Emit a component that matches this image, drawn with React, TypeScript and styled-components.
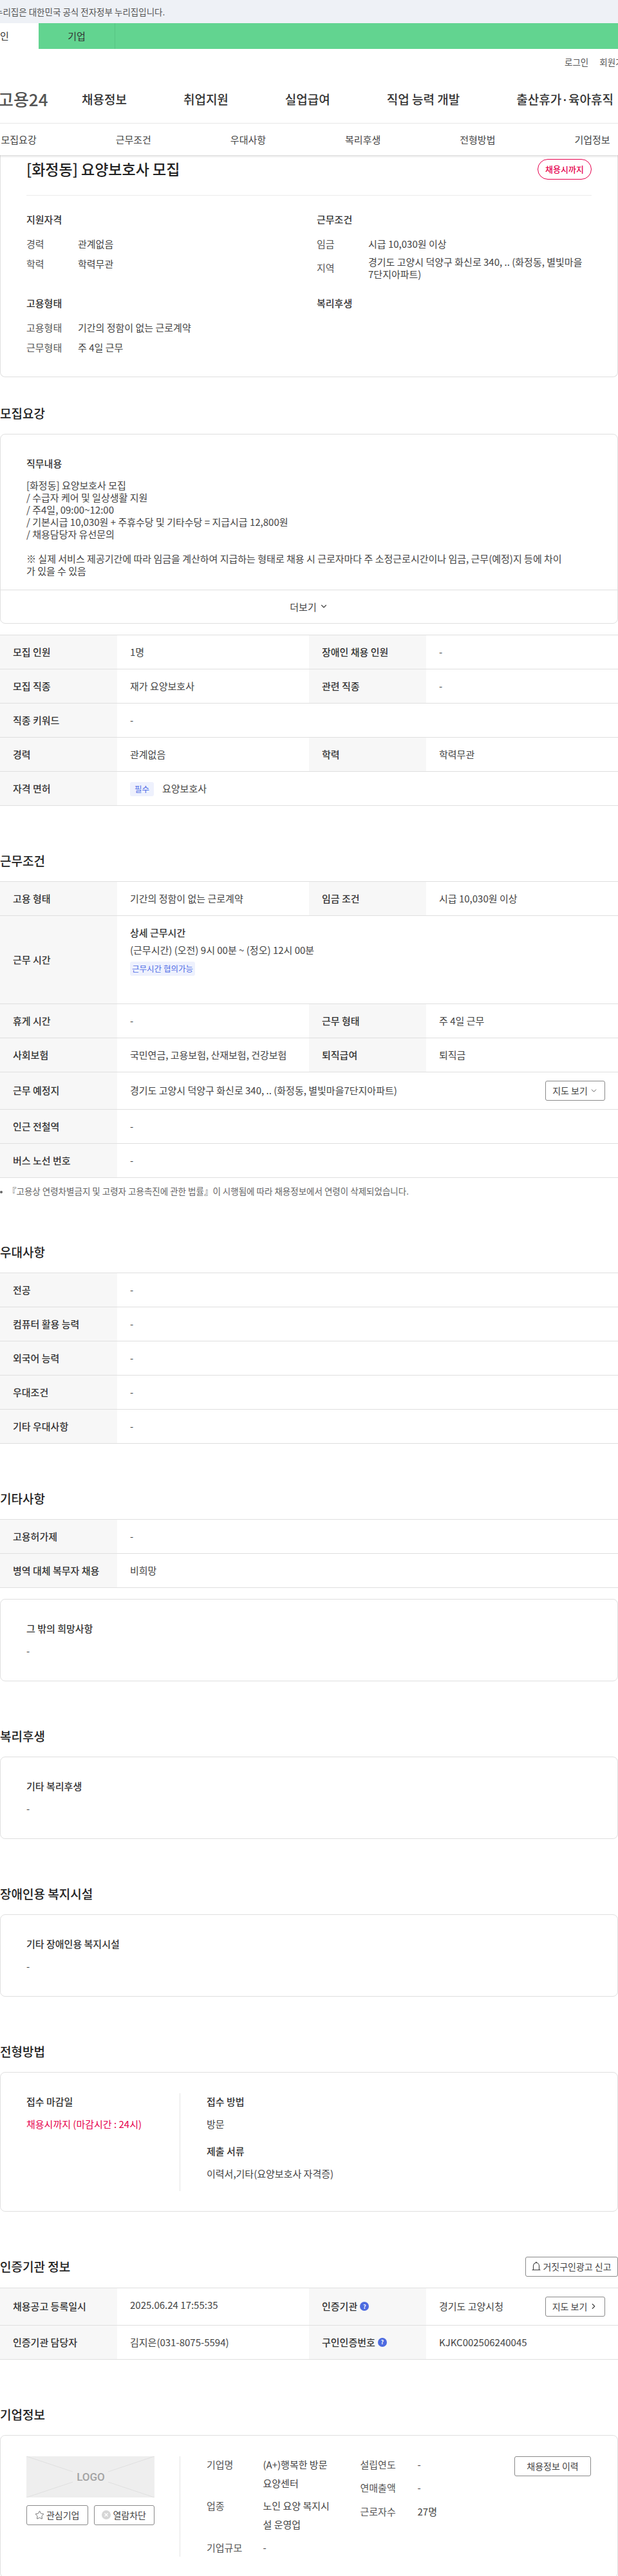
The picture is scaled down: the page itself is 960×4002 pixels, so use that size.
import React from "react";
import { FC, ReactNode } from "react";
import styled, { createGlobalStyle } from "styled-components";
import { ChevronDown, ChevronRight, Star } from "lucide-react";

const GlobalStyle = createGlobalStyle`
  * {
    box-sizing: border-box;
  }
  html, body {
    margin: 0;
    padding: 0;
    background: #fff;
  }
  body {
    font-family: "Noto Sans CJK KR", "Noto Sans", sans-serif;
    font-size: 15px;
    color: #444;
  }
`;

const Page = styled.div`
  width: 960px;
  height: 4002px;
  overflow: hidden;
`;

/* top strips */
const GovBar = styled.div`
  height: 36px;
  background: #eef1f6;
  padding-left: 0;
  font-size: 13.5px;
  line-height: 36px;
  color: #555;
  white-space: nowrap;
  & > span {
    display: block;
    margin-left: -8px;
  }
`;
const GreenBar = styled.div`
  display: flex;
  height: 40px;
  background: #62d490;
`;
const SiteTab = styled.div<{ $active?: boolean }>`
  flex: none;
  margin-left: ${(p) => (p.$active ? "-60px" : "0")};
  width: ${(p) => (p.$active ? "120px" : "119px")};
  background: ${(p) => (p.$active ? "#fff" : "transparent")};
  border-right: ${(p) => (p.$active ? "0" : "1px solid #58c583")};
  font-size: 15px;
  line-height: 40px;
  text-align: center;
  color: #333;
`;

/* header */
const UtilRow = styled.div`
  display: flex;
  gap: 17px;
  height: 40px;
  padding-left: 877px;
  font-size: 13.5px;
  line-height: 40px;
  color: #555;
  white-space: nowrap;
`;
const NavRow = styled.nav`
  display: flex;
  align-items: center;
  height: 76px;
  margin-top: 0;
  border-bottom: 1px solid #e8e8e8;
  white-space: nowrap;
  padding-bottom: 0;
`;
const SiteLogo = styled.div`
  flex: none;
  width: 127px;
  margin-left: -3px;
  padding-right: 0;
  font-size: 26px;
  font-weight: 500;
  color: #555;
  line-height: 1;
`;
const NavLinks = styled.div`
  display: flex;
  gap: 88px;
  margin-left: 3px;
  font-size: 19px;
  font-weight: 500;
  color: #333;
`;
const TabBar = styled.div`
  display: grid;
  grid-template-columns: repeat(6, 178.2px);
  margin-left: -60px;
  height: 49px;
  font-size: 15px;
  line-height: 49px;
  text-align: center;
  color: #444;
`;
const TabBarWrap = styled.div`
  position: relative;
  z-index: 1;
  height: 49px;
  box-shadow: 0 2px 3px rgba(0, 0, 0, 0.14);
  background: #fff;
`;

/* cards */
const Card = styled.div`
  border: 1px solid #dfdfdf;
  border-radius: 8px;
  background: #fff;
  overflow: hidden;
`;
const SummaryCard = styled(Card)`
  height: 345px;
  border-top: 0;
  border-radius: 0 0 8px 8px;
  padding: 6px 40px 0;
`;
const SummaryHead = styled.div`
  display: flex;
  align-items: flex-start;
  justify-content: space-between;
  height: 57px;
  border-bottom: 1px solid #ebebeb;
`;
const JobTitle = styled.h1`
  margin: 0;
  font-size: 23px;
  font-weight: 500;
  line-height: 30px;
  color: #222;
`;
const DeadlinePill = styled.div`
  width: 84px;
  height: 32px;
  border: 1px solid #e6004d;
  border-radius: 16px;
  font-size: 13px;
  font-weight: 500;
  line-height: 30px;
  text-align: center;
  color: #e6004d;
`;
const SummaryGrid = styled.div`
  display: grid;
  grid-template-columns: 451px 1fr;
  row-gap: 25.5px;
  margin-top: 26px;
`;
const SubTitle = styled.h3`
  margin: 0 0 13px;
  font-size: 15px;
  font-weight: 500;
  line-height: 22px;
  color: #333;
`;
const InfoRow = styled.div`
  display: flex;
  align-items: center;
  min-height: 26px;
  & + & {
    margin-top: 5.5px;
  }
`;
const InfoLabel = styled.span`
  flex: none;
  width: 80px;
  color: #555;
`;
const InfoValue = styled.span`
  line-height: 19px;
  color: #444;
`;

/* sections */
const SectionHead = styled.div<{ $first?: boolean }>`
  display: flex;
  align-items: center;
  justify-content: space-between;
  margin-top: ${(p) => (p.$first ? "40.5px" : "70px")};
  margin-bottom: 17px;
  min-height: 30px;
`;
const SectionTitle = styled.h2`
  margin: 0;
  font-size: 19px;
  font-weight: 500;
  line-height: 30px;
  color: #222;
`;

const DutyBody = styled.div`
  padding: 34px 40px 20px;
`;
const DutyText = styled.div`
  line-height: 19px;
  white-space: pre-line;
  color: #444;
`;
const MoreRow = styled.div`
  display: flex;
  align-items: center;
  justify-content: center;
  gap: 4px;
  height: 52px;
  border-top: 1px solid #dfdfdf;
  color: #444;
`;

const TextCard = styled(Card)<{ $spaced?: boolean }>`
  margin-top: ${(p) => (p.$spaced ? "17px" : "0")};
  padding: 34px 40px 35px;
`;
const PlainValue = styled.div`
  line-height: 22px;
  color: #444;
`;
const AccentValue = styled(PlainValue)`
  color: #e6004d;
`;

/* tables */
const Table = styled.div<{ $spaced?: boolean }>`
  margin-top: ${(p) => (p.$spaced ? "17px" : "0")};
  border-top: 1px solid #dfdfdf;
`;
const Row = styled.div`
  display: grid;
  grid-template-columns: 182px 298px 182px 298px;
  border-bottom: 1px solid #dfdfdf;
`;
const Th = styled.div`
  display: flex;
  align-items: center;
  gap: 4px;
  padding: 13px 20px;
  background: #f7f7f7;
  font-weight: 500;
  line-height: 26px;
  color: #333;
  white-space: nowrap;
`;
const Td = styled.div<{ $wide?: boolean }>`
  grid-column: ${(p) => (p.$wide ? "span 3" : "auto")};
  padding: 13px 20px;
  line-height: 26px;
  color: #444;
  min-width: 0;
`;
const FlexTd = styled(Td)`
  display: flex;
  align-items: center;
  justify-content: space-between;
`;
const HoursTd = styled(Td)`
  padding-bottom: 43px;
`;
const HoursTitle = styled.div`
  font-weight: 500;
  color: #333;
`;
const HoursLine = styled.div`
  margin-top: 1px;
`;
const Tag = styled.span`
  display: inline-block;
  height: 22px;
  padding: 0 7px;
  border-radius: 3px;
  background: #eef1fd;
  font-size: 12.5px;
  line-height: 22px;
  color: #4f6de6;
  vertical-align: middle;
`;
const HoursTag = styled(Tag)`
  display: block;
  width: 101px;
  margin-top: 5px;
  padding: 0;
  text-align: center;
`;
const LicenceTag = styled(Tag)`
  margin-right: 13px;
`;
const OutlineButton = styled.button`
  display: inline-flex;
  align-items: center;
  justify-content: center;
  flex: none;
  height: 31px;
  padding: 0;
  gap: 3px;
  border: 1px solid #8a8a8a;
  border-radius: 3px;
  background: #fff;
  font-family: inherit;
  font-size: 14px;
  color: #444;
  white-space: nowrap;
`;
const MapButton = styled(OutlineButton)`
  width: 93px;
`;
const ReportButton = styled(OutlineButton)`
  width: 144px;
`;
const Footnote = styled.p`
  margin: 10px 0 0;
  font-size: 13.5px;
  line-height: 20px;
  color: #666;
  white-space: nowrap;
  &::before {
    content: "";
    display: inline-block;
    width: 4px;
    height: 4px;
    margin-right: 8px;
    border-radius: 50%;
    background: #666;
    vertical-align: middle;
  }
`;
const HelpDot = styled.span`
  display: inline-flex;
  align-items: center;
  justify-content: center;
  width: 14px;
  height: 14px;
  border-radius: 50%;
  background: #4d6be0;
  font-size: 9px;
  font-weight: 700;
  line-height: 1;
  color: #fff;
`;

/* 전형방법 */
const ProcessCard = styled(Card)`
  display: flex;
  height: 217px;
  padding: 32px 40px 0;
`;
const ProcessLeft = styled.div`
  width: 239px;
  height: 152px;
  padding-top: 2px;
  border-right: 1px solid #e5e5e5;
`;
const ProcessRight = styled.div`
  padding: 2px 0 0 41px;
`;
const ProcessBlock = styled.div`
  & + & {
    margin-top: 20px;
  }
`;

/* 기업정보 */
const CompanyCard = styled(Card)`
  display: flex;
  height: 222px;
  padding: 32px 40px 0;
`;
const CompanyLeft = styled.div`
  flex: none;
  width: 239px;
  height: 156px;
  padding-right: 40px;
  border-right: 1px solid #e5e5e5;
`;
const LogoBox = styled.svg`
  display: block;
  width: 199px;
  height: 64px;
`;
const CompanyButtons = styled.div`
  display: grid;
  grid-template-columns: 95.5px 94.5px;
  column-gap: 9px;
  margin-top: 12px;
`;
const CompanyCol = styled.dl<{ $width: string }>`
  display: grid;
  flex: none;
  grid-template-columns: ${(p) => p.$width};
  align-content: start;
  margin: -2px 0 0;
`;
const CompanyNameCol = styled(CompanyCol)`
  width: 238.5px;
  margin-left: 41px;
  row-gap: 6.7px;
`;
const CompanyStatCol = styled(CompanyCol)`
  width: 239.5px;
  row-gap: 7.5px;
`;
const CompanyLabel = styled.dt`
  line-height: 29px;
  color: #555;
`;
const CompanyValue = styled.dd`
  margin: 0;
  line-height: 29px;
  color: #444;
`;
const HistoryButton = styled(OutlineButton)`
  width: 119px;
`;

const infoBlocks = [
  {
    title: "지원자격",
    rows: [
      ["경력", "관계없음"],
      ["학력", "학력무관"],
    ],
  },
  {
    title: "근무조건",
    rows: [
      ["임금", "시급 10,030원 이상"],
      ["지역", "경기도 고양시 덕양구 화신로 340, .. (화정동, 별빛마을\n7단지아파트)"],
    ],
  },
  {
    title: "고용형태",
    rows: [
      ["고용형태", "기간의 정함이 없는 근로계약"],
      ["근무형태", "주 4일 근무"],
    ],
  },
  { title: "복리후생", rows: [] },
];

const dutyText = `[화정동]  요양보호사 모집
/ 수급자 케어 및 일상생활 지원
/ 주4일, 09:00~12:00
/ 기본시급 10,030원 + 주휴수당 및 기타수당  = 지급시급 12,800원
/  채용담당자 유선문의

 ※ 실제 서비스 제공기간에 따라 임금을 계산하여 지급하는 형태로 채용 시 근로자마다 주 소정근로시간이나 임금, 근무(예정)지 등에 차이
가 있을 수 있음`;

const BellIcon = () => (
  <svg width="14" height="16" viewBox="0 0 14 16" fill="none" stroke="#444" strokeWidth="1.1">
    <path d="M2.5 13.5V7a4.5 4.5 0 0 1 9 0v6.5" />
    <path d="M0.5 13.5h13" />
    <path d="M6 2.4 7 1.4l1 1" />
  </svg>
);

const BlockIcon = () => (
  <svg width="14" height="14" viewBox="0 0 14 14">
    <circle cx="7" cy="7" r="7" fill="#d6d6d6" />
    <path d="M4.5 4.5l5 5M9.5 4.5l-5 5" stroke="#fff" strokeWidth="1.3" />
  </svg>
);

const LogoPlaceholder = () => (
  <LogoBox viewBox="0 0 199 64">
    <rect width="199" height="64" fill="#eeeeee" />
    <path d="M0 0 72 24M199 0 127 24M0 64 72 40M199 64 127 40" stroke="#e0e0e0" strokeWidth="1" />
    <text
      x="100"
      y="38"
      textAnchor="middle"
      fontFamily="Roboto, sans-serif"
      fontSize="17"
      fontWeight="500"
      fill="#a3a3a3"
    >
      LOGO
    </text>
  </LogoBox>
);

const Section: FC<{ title: string; first?: boolean; action?: ReactNode; children: ReactNode }> = ({
  title,
  first,
  action,
  children,
}) => (
  <section>
    <SectionHead $first={first}>
      <SectionTitle>{title}</SectionTitle>
      {action}
    </SectionHead>
    {children}
  </section>
);

const LabelOnlyTable: FC<{ rows: string[][]; spaced?: boolean }> = ({ rows, spaced }) => (
  <Table $spaced={spaced}>
    {rows.map(([label, value]) => (
      <Row key={label}>
        <Th>{label}</Th>
        <Td $wide>{value}</Td>
      </Row>
    ))}
  </Table>
);

const TextBlockCard: FC<{ title: string; spaced?: boolean }> = ({ title, spaced }) => (
  <TextCard $spaced={spaced}>
    <SubTitle>{title}</SubTitle>
    <PlainValue>-</PlainValue>
  </TextCard>
);

export default function App() {
  return (
    <Page>
      <GlobalStyle />
      <GovBar>
        <span>누리집은 대한민국 공식 전자정부 누리집입니다.</span>
      </GovBar>
      <GreenBar>
        <SiteTab $active>개인</SiteTab>
        <SiteTab>기업</SiteTab>
      </GreenBar>
      <UtilRow>
        <span>로그인</span>
        <span>회원가입</span>
      </UtilRow>
      <NavRow>
        <SiteLogo>고용24</SiteLogo>
        <NavLinks>
          <span>채용정보</span>
          <span>취업지원</span>
          <span>실업급여</span>
          <span>직업 능력 개발</span>
          <span>출산휴가·육아휴직</span>
        </NavLinks>
      </NavRow>
      <TabBarWrap>
        <TabBar>
          {["모집요강", "근무조건", "우대사항", "복리후생", "전형방법", "기업정보"].map((t) => (
            <span key={t}>{t}</span>
          ))}
        </TabBar>
      </TabBarWrap>

      <SummaryCard>
        <SummaryHead>
          <JobTitle>[화정동] 요양보호사 모집</JobTitle>
          <DeadlinePill>채용시까지</DeadlinePill>
        </SummaryHead>
        <SummaryGrid>
          {infoBlocks.map((block) => (
            <div key={block.title}>
              <SubTitle>{block.title}</SubTitle>
              {block.rows.map(([label, value]) => (
                <InfoRow key={label}>
                  <InfoLabel>{label}</InfoLabel>
                  <InfoValue style={{ whiteSpace: "pre-line" }}>{value}</InfoValue>
                </InfoRow>
              ))}
            </div>
          ))}
        </SummaryGrid>
      </SummaryCard>

      <Section title="모집요강" first>
        <Card>
          <DutyBody>
            <SubTitle>직무내용</SubTitle>
            <DutyText>{dutyText}</DutyText>
          </DutyBody>
          <MoreRow>
            더보기 <ChevronDown size={14} strokeWidth={2} />
          </MoreRow>
        </Card>
        <Table $spaced>
          <Row>
            <Th>모집 인원</Th>
            <Td>1명</Td>
            <Th>장애인 채용 인원</Th>
            <Td>-</Td>
          </Row>
          <Row>
            <Th>모집 직종</Th>
            <Td>재가 요양보호사</Td>
            <Th>관련 직종</Th>
            <Td>-</Td>
          </Row>
          <Row>
            <Th>직종 키워드</Th>
            <Td $wide>-</Td>
          </Row>
          <Row>
            <Th>경력</Th>
            <Td>관계없음</Td>
            <Th>학력</Th>
            <Td>학력무관</Td>
          </Row>
          <Row>
            <Th>자격 면허</Th>
            <Td $wide>
              <LicenceTag>필수</LicenceTag>요양보호사
            </Td>
          </Row>
        </Table>
      </Section>

      <Section title="근무조건">
        <Table>
          <Row>
            <Th>고용 형태</Th>
            <Td>기간의 정함이 없는 근로계약</Td>
            <Th>임금 조건</Th>
            <Td>시급 10,030원 이상</Td>
          </Row>
          <Row>
            <Th>근무 시간</Th>
            <HoursTd $wide>
              <HoursTitle>상세 근무시간</HoursTitle>
              <HoursLine>(근무시간) (오전) 9시 00분 ~ (정오) 12시 00분</HoursLine>
              <HoursTag>근무시간 협의가능</HoursTag>
            </HoursTd>
          </Row>
          <Row>
            <Th>휴게 시간</Th>
            <Td>-</Td>
            <Th>근무 형태</Th>
            <Td>주 4일 근무</Td>
          </Row>
          <Row>
            <Th>사회보험</Th>
            <Td>국민연금, 고용보험, 산재보험, 건강보험</Td>
            <Th>퇴직급여</Th>
            <Td>퇴직금</Td>
          </Row>
          <Row>
            <Th>근무 예정지</Th>
            <FlexTd $wide>
              <span>경기도 고양시 덕양구 화신로 340, .. (화정동, 별빛마을7단지아파트)</span>
              <MapButton>
                지도 보기 <ChevronDown size={13} strokeWidth={1.6} />
              </MapButton>
            </FlexTd>
          </Row>
          <Row>
            <Th>인근 전철역</Th>
            <Td $wide>-</Td>
          </Row>
          <Row>
            <Th>버스 노선 번호</Th>
            <Td $wide>-</Td>
          </Row>
        </Table>
        <Footnote>『고용상 연령차별금지 및 고령자 고용촉진에 관한 법률』이 시행됨에 따라 채용정보에서 연령이 삭제되었습니다.</Footnote>
      </Section>

      <Section title="우대사항">
        <LabelOnlyTable
          rows={[
            ["전공", "-"],
            ["컴퓨터 활용 능력", "-"],
            ["외국어 능력", "-"],
            ["우대조건", "-"],
            ["기타 우대사항", "-"],
          ]}
        />
      </Section>

      <Section title="기타사항">
        <LabelOnlyTable
          rows={[
            ["고용허가제", "-"],
            ["병역 대체 복무자 채용", "비희망"],
          ]}
        />
        <TextBlockCard title="그 밖의 희망사항" spaced />
      </Section>

      <Section title="복리후생">
        <TextBlockCard title="기타 복리후생" />
      </Section>

      <Section title="장애인용 복지시설">
        <TextBlockCard title="기타 장애인용 복지시설" />
      </Section>

      <Section title="전형방법">
        <ProcessCard>
          <ProcessLeft>
            <SubTitle>접수 마감일</SubTitle>
            <AccentValue>채용시까지 (마감시간 : 24시)</AccentValue>
          </ProcessLeft>
          <ProcessRight>
            <ProcessBlock>
              <SubTitle>접수 방법</SubTitle>
              <PlainValue>방문</PlainValue>
            </ProcessBlock>
            <ProcessBlock>
              <SubTitle>제출 서류</SubTitle>
              <PlainValue>이력서,기타(요양보호사 자격증)</PlainValue>
            </ProcessBlock>
          </ProcessRight>
        </ProcessCard>
      </Section>

      <Section
        title="인증기관 정보"
        action={
          <ReportButton>
            <BellIcon /> 거짓구인광고 신고
          </ReportButton>
        }
      >
        <Table>
          <Row>
            <Th>채용공고 등록일시</Th>
            <Td>2025.06.24 17:55:35</Td>
            <Th>
              인증기관 <HelpDot>?</HelpDot>
            </Th>
            <FlexTd>
              <span>경기도 고양시청</span>
              <MapButton>
                지도 보기 <ChevronRight size={14} strokeWidth={2} />
              </MapButton>
            </FlexTd>
          </Row>
          <Row>
            <Th>인증기관 담당자</Th>
            <Td>김지은(031-8075-5594)</Td>
            <Th>
              구인인증번호 <HelpDot>?</HelpDot>
            </Th>
            <Td>KJKC002506240045</Td>
          </Row>
        </Table>
      </Section>

      <Section title="기업정보">
        <CompanyCard>
          <CompanyLeft>
            <LogoPlaceholder />
            <CompanyButtons>
              <OutlineButton>
                <Star size={15} strokeWidth={1.2} /> 관심기업
              </OutlineButton>
              <OutlineButton>
                <BlockIcon /> 열람차단
              </OutlineButton>
            </CompanyButtons>
          </CompanyLeft>
          <CompanyNameCol $width="87.5px 111px">
            <CompanyLabel>기업명</CompanyLabel>
            <CompanyValue>(A+)행복한 방문 요양센터</CompanyValue>
            <CompanyLabel>업종</CompanyLabel>
            <CompanyValue>노인 요양 복지시설 운영업</CompanyValue>
            <CompanyLabel>기업규모</CompanyLabel>
            <CompanyValue>-</CompanyValue>
          </CompanyNameCol>
          <CompanyStatCol $width="89px 1fr">
            <CompanyLabel>설립연도</CompanyLabel>
            <CompanyValue>-</CompanyValue>
            <CompanyLabel>연매출액</CompanyLabel>
            <CompanyValue>-</CompanyValue>
            <CompanyLabel>근로자수</CompanyLabel>
            <CompanyValue>27명</CompanyValue>
          </CompanyStatCol>
          <HistoryButton>채용정보 이력</HistoryButton>
        </CompanyCard>
      </Section>
    </Page>
  );
}
